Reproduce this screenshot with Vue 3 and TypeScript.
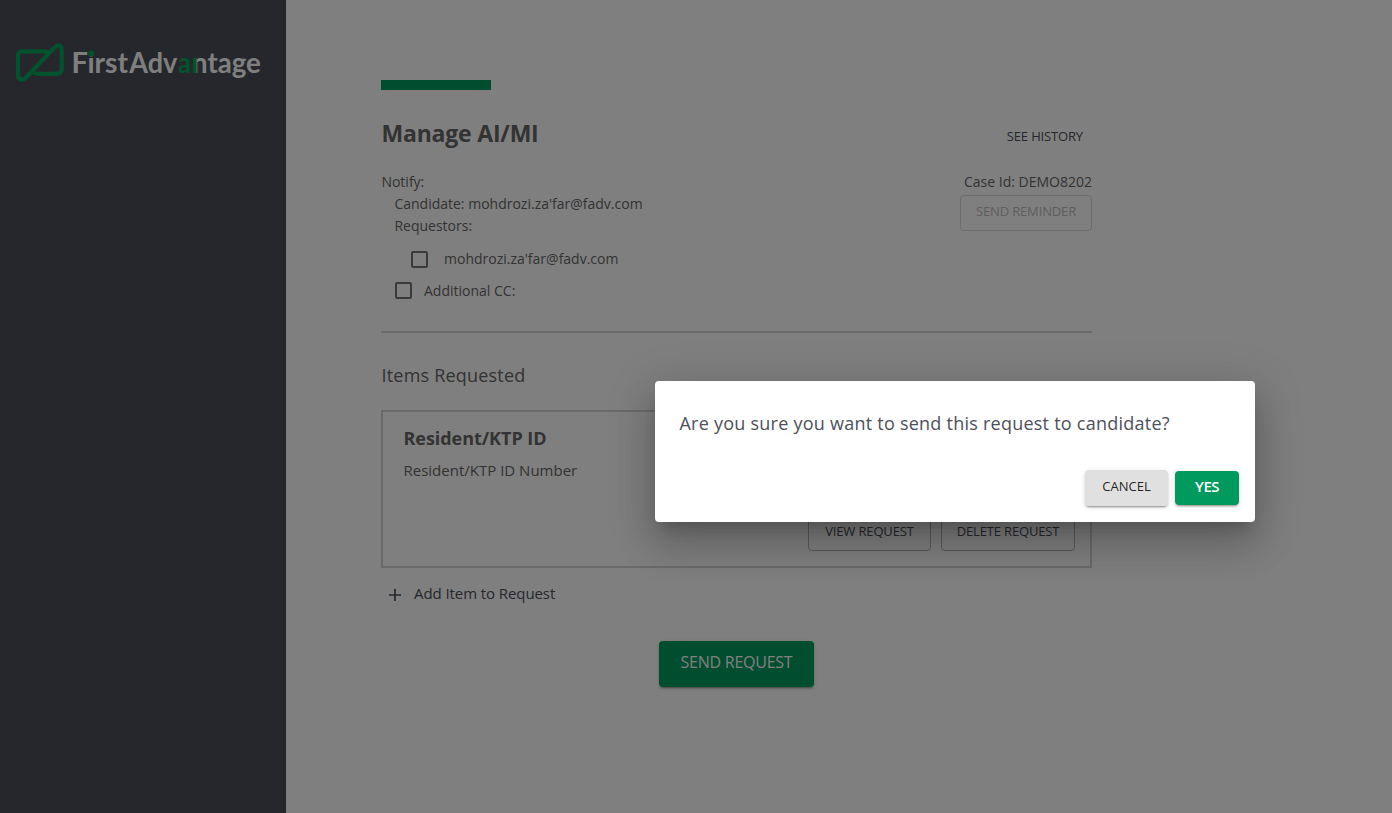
<script setup lang="ts">
import { ref } from 'vue'

interface RequestItem {
  title: string
  detail: string
}

const email = "mohdrozi.za'far@fadv.com"
const notifyRequestor = ref(false)
const notifyCc = ref(false)
const items: RequestItem[] = [{ title: 'Resident/KTP ID', detail: 'Resident/KTP ID Number' }]
</script>

<template>
  <div class="page">
    <aside class="sidebar">
      <svg class="logo" width="260" height="56" viewBox="0 0 260 56">
        <path
          d="M36 15.5 L34.5 14 Q32.8 12.3 30 12.3 H8.5 Q4 12.3 4 16.8 V35.5 Q4 40.6 8 40.6 Q10 40.6 12 38.5 L40 9 Q42.2 6.4 44.4 6.4 Q47.7 6.4 47.7 11 V30 Q47.7 34.8 43 34.8 H23.5 Q21 34.8 19 33 L18 32"
          fill="none" stroke="#00a65a" stroke-width="4.2" stroke-linejoin="round"
        />
        <g class="brand">
          <text x="57.6" y="34.2">F</text>
          <text x="73.4" y="34.2" textLength="40.6" lengthAdjust="spacingAndGlyphs">irst</text>
          <text x="115.2" y="34.2" textLength="48" lengthAdjust="spacingAndGlyphs">Adv</text>
          <text class="brand-green" x="164" y="34.2" textLength="13" lengthAdjust="spacingAndGlyphs">a</text>
          <text x="178" y="34.2" textLength="68.8" lengthAdjust="spacingAndGlyphs">ntage</text>
        </g>
        <circle cx="77.2" cy="14.4" r="2.9" fill="#00a65a" />
        <rect x="179" y="18.8" width="3.6" height="15.4" fill="#00a65a" />
      </svg>
    </aside>
    <main class="content">
      <div class="accent"></div>
      <header class="head">
        <h1>Manage AI/MI</h1>
        <button class="history">SEE HISTORY</button>
      </header>
      <section class="notify">
        <div class="people">
          <div class="line"><span>Notify:</span></div>
          <div class="line inset"><span>Candidate: {{ email }}</span></div>
          <div class="line inset"><span>Requestors:</span></div>
          <label class="check requestor">
            <input v-model="notifyRequestor" type="checkbox" /><span>{{ email }}</span>
          </label>
          <label class="check cc">
            <input v-model="notifyCc" type="checkbox" /><span>Additional CC:</span>
          </label>
        </div>
        <div class="case">
          <div class="line"><span>Case Id: DEMO8202</span></div>
          <button class="outlined reminder" disabled><span>SEND REMINDER</span></button>
        </div>
      </section>
      <h2><span>Items Requested</span></h2>
      <article v-for="item in items" :key="item.title" class="card">
        <h3><span>{{ item.title }}</span></h3>
        <p><span>{{ item.detail }}</span></p>
        <div class="card-actions">
          <button class="outlined view"><span>VIEW REQUEST</span></button>
          <button class="outlined delete"><span>DELETE REQUEST</span></button>
        </div>
      </article>
      <button class="add">
        <svg width="12" height="12" viewBox="0 0 12 12"><path d="M6 0V12M0 6H12" stroke="#4b4f5a" stroke-width="1.7" /></svg>
        <span>Add Item to Request</span>
      </button>
      <button class="send"><span>SEND REQUEST</span></button>
    </main>
    <div class="overlay"></div>
    <div class="dialog" role="dialog">
      <p class="question"><span>Are you sure you want to send this request to candidate?</span></p>
      <div class="dialog-actions">
        <button class="cancel"><span>CANCEL</span></button>
        <button class="yes"><span>YES</span></button>
      </div>
    </div>
  </div>
</template>

<style>
body {
  margin: 0;
}
</style>

<style scoped>
.page {
  position: relative;
  display: flex;
  width: 1392px;
  height: 813px;
  overflow: hidden;
  background: #fff;
  color: #666;
  font-family: "Open Sans", "Noto Sans", sans-serif;
  font-size: 14px;
}
h1, h2, h3, p {
  margin: 0;
}
button {
  box-sizing: border-box;
  padding: 0;
  border: 0;
  background: none;
  color: #4b4f5a;
  font: 13px/20px "Open Sans", "Noto Sans", sans-serif;
  letter-spacing: -.15px;
  white-space: nowrap;
}
.sidebar {
  flex: none;
  box-sizing: border-box;
  width: 286px;
  padding: 39px 0 0 14px;
  background: #4b4e58;
}
.logo {
  display: block;
}
.brand {
  font-family: Lato, "Open Sans", sans-serif;
  font-size: 29px;
  font-weight: 700;
  fill: #fff;
}
.brand-green {
  fill: #00a65a;
}
.content {
  display: flex;
  flex-direction: column;
  width: 711px;
  margin-left: 95px;
  padding-top: 80px;
}
.accent {
  width: 110px;
  height: 10px;
  background: #009a5e;
}
.head {
  display: flex;
  justify-content: space-between;
  height: 81px;
}
h1 {
  padding: 28px 0 0 .5px;
  font-size: 23px;
  font-weight: 700;
  line-height: 30px;
  letter-spacing: -.2px;
}
.history {
  height: 20px;
  margin: 36px 9px 0 0;
}
.notify {
  display: flex;
  justify-content: space-between;
  box-sizing: border-box;
  height: 162px;
  border-bottom: 2px solid #d4d4d4;
}
.line {
  height: 22px;
  padding-left: .4px;
  line-height: 22px;
}
.line.inset {
  padding-left: 13.4px;
}
.check {
  display: flex;
  align-items: center;
  height: 32px;
}
.check input {
  appearance: none;
  box-sizing: border-box;
  width: 17px;
  height: 17px;
  margin: 1px 0 0;
  border: 2px solid #757575;
  border-radius: 2px;
}
.requestor {
  margin-top: 5px;
  padding-left: 30px;
  gap: 16px;
}
.requestor input {
  margin-top: 3px;
}
.cc {
  padding-left: 14px;
  gap: 12px;
}
.case {
  display: flex;
  flex-direction: column;
  align-items: flex-end;
}
.outlined {
  height: 36px;
  padding-bottom: 5px;
  border: 1px solid #b4b4b8;
  border-radius: 4px;
}
.reminder {
  width: 132px;
  margin-top: 2px;
  border-color: #dadada;
  color: #bdbdbd;
}
h2 {
  margin-top: 30px;
  height: 47px;
  padding-left: .5px;
  font-size: 18px;
  font-weight: 400;
  line-height: 24px;
  letter-spacing: .2px;
}
.card {
  box-sizing: border-box;
  height: 158px;
  padding: 13px 15px 15px 20.5px;
  border: 2px solid #d4d4d4;
  display: flex;
  flex-direction: column;
}
h3 {
  font-size: 18px;
  font-weight: 700;
  line-height: 26px;
  letter-spacing: -.05px;
}
.card p {
  margin-top: 7px;
  font-size: 15px;
  line-height: 24px;
}
.card-actions {
  display: flex;
  justify-content: flex-end;
  gap: 10px;
  margin-top: auto;
}
.view {
  width: 123px;
}
.delete {
  width: 134px;
}
.add {
  display: flex;
  align-items: center;
  align-self: flex-start;
  gap: 13px;
  height: 24px;
  margin: 15px 0 0 8px;
  font-size: 15px;
  letter-spacing: -.08px;
}
.add span {
  margin-bottom: 4px;
}
.send {
  align-self: center;
  width: 155px;
  height: 46px;
  margin-top: 34px;
  padding-bottom: 5px;
  border-radius: 4px;
  background: #009a5e;
  box-shadow: 0 3px 1px -2px rgba(0, 0, 0, .2), 0 2px 2px rgba(0, 0, 0, .14), 0 1px 5px rgba(0, 0, 0, .12);
  color: #fff;
  font-size: 16px;
  letter-spacing: -.25px;
}
.overlay {
  position: absolute;
  inset: 0;
  background: rgba(0, 0, 0, .5);
}
.dialog {
  position: absolute;
  left: 655px;
  top: 381px;
  box-sizing: border-box;
  width: 600px;
  height: 141px;
  padding: 29px 16px 16px 24.5px;
  border-radius: 4px;
  background: #fff;
  box-shadow: 0 11px 15px -7px rgba(0, 0, 0, .2), 0 24px 38px 3px rgba(0, 0, 0, .14), 0 9px 46px 8px rgba(0, 0, 0, .12);
}
.question {
  height: 60px;
  color: #4c505a;
  font-size: 18px;
  line-height: 26px;
  letter-spacing: .24px;
  white-space: nowrap;
}
.dialog-actions {
  display: flex;
  align-items: center;
  justify-content: flex-end;
  gap: 7px;
}
.cancel {
  width: 83px;
  height: 36px;
  padding-bottom: 4px;
  border-radius: 4px;
  background: #e0e0e0;
  box-shadow: 0 3px 1px -2px rgba(0, 0, 0, .2), 0 2px 2px rgba(0, 0, 0, .14), 0 1px 5px rgba(0, 0, 0, .12);
  color: rgba(0, 0, 0, .87);
  letter-spacing: 0;
}
.yes {
  width: 64px;
  height: 34px;
  padding-bottom: 4px;
  border-radius: 4px;
  background: #009a5e;
  box-shadow: 0 3px 1px -2px rgba(0, 0, 0, .2), 0 2px 2px rgba(0, 0, 0, .14), 0 1px 5px rgba(0, 0, 0, .12);
  color: #fff;
  font-size: 15px;
  font-weight: 600;
  letter-spacing: -.5px;
}
</style>
